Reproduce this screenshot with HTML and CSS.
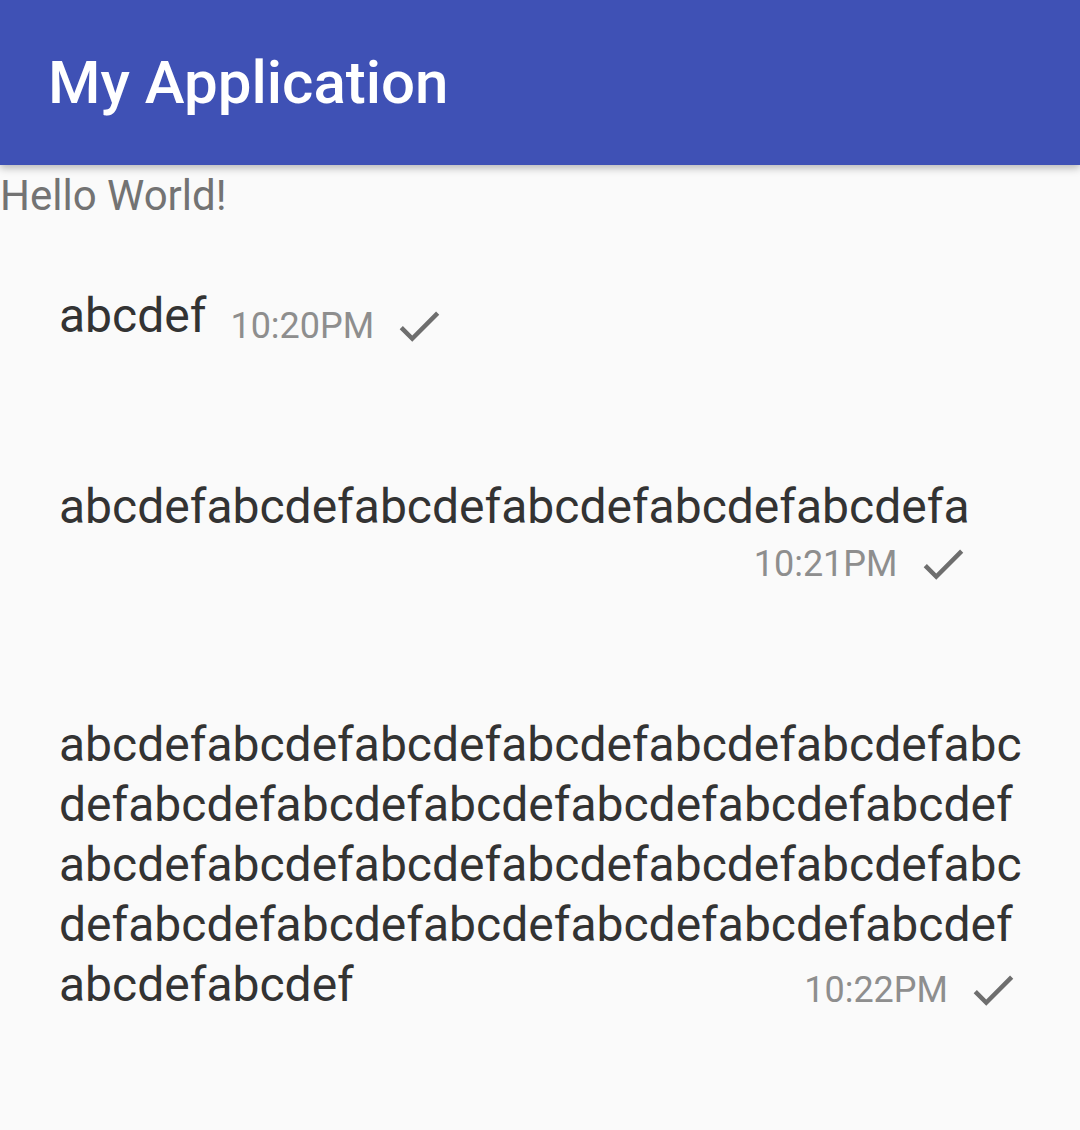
FILE: index.html
```html
<!DOCTYPE html>
<html lang="en">
<head>
<meta charset="utf-8">
<title>My Application</title>
<link rel="stylesheet" href="styles.css">
</head>
<body>
<header class="toolbar">
  <h1 class="toolbar-title">My Application</h1>
</header>
<main class="content">
  <p class="hello">Hello World!</p>
  <ul class="messages">
    <li class="msg msg-inline">
      <span class="msg-text">abcdef</span>
      <span class="meta">
        <span class="time">10:20PM</span>
        <svg class="check" viewBox="0 0 24 24" aria-hidden="true"><path d="M9 16.17L4.83 12l-1.42 1.41L9 19 21 7l-1.41-1.41z"/></svg>
      </span>
    </li>
    <li class="msg msg-below">
      <span class="msg-text">abcdefabcdefabcdefabcdefabcdefabcdefa</span>
      <span class="meta">
        <span class="time">10:21PM</span>
        <svg class="check" viewBox="0 0 24 24" aria-hidden="true"><path d="M9 16.17L4.83 12l-1.42 1.41L9 19 21 7l-1.41-1.41z"/></svg>
      </span>
    </li>
    <li class="msg msg-wrap">
      <p class="msg-text">abcdefabcdefabcdefabcdefabcdefabcdefabcdefabcdefabcdefabcdefabcdefabcdefabcdefabcdefabcdefabcdefabcdefabcdefabcdefabcdefabcdefabcdefabcdefabcdefabcdefabcdefabcdefabcdef<span class="meta"><span class="time">10:22PM</span><svg class="check" viewBox="0 0 24 24" aria-hidden="true"><path d="M9 16.17L4.83 12l-1.42 1.41L9 19 21 7l-1.41-1.41z"/></svg></span></p>
    </li>
  </ul>
</main>
</body>
</html>
```

FILE: styles.css
```css
* {
  box-sizing: border-box;
}

html, body {
  margin: 0;
  padding: 0;
}

body {
  background: #fafafa;
  font-family: Roboto, "Noto Sans", "Liberation Sans", sans-serif;
  width: 1080px;
  min-height: 1130px;
  overflow: hidden;
}

.toolbar {
  position: relative;
  z-index: 1;
  height: 165px;
  background: #3f51b5;
  display: flex;
  align-items: center;
  padding-left: 48px;
  box-shadow: 0 3px 8px rgba(0, 0, 0, 0.28);
}

.toolbar-title {
  margin: 0;
  color: #ffffff;
  font-size: 60px;
  font-weight: 500;
  line-height: 1;
}

.content {
  display: block;
}

.hello {
  margin: 6px 0 0 0;
  font-size: 42px;
  color: #737373;
  line-height: 49px;
}

.messages {
  list-style: none;
  margin: 0;
  padding: 4px 0 0 0;
  display: flex;
  flex-direction: column;
  align-items: flex-start;
}

.msg {
  padding: 62px 60px 62px 59px;
  max-width: 1080px;
}

.msg-text {
  margin: 0;
  font-size: 48px;
  line-height: 60px;
  color: #333333;
  word-break: break-all;
}

.meta {
  display: flex;
  align-items: center;
  height: 54px;
}

.time {
  font-size: 36px;
  line-height: 42px;
  color: #8e8e8e;
  margin-right: 18px;
}

.check {
  width: 54px;
  height: 54px;
  fill: #6e6e6e;
  flex: none;
}

.msg-inline {
  display: flex;
  align-items: flex-start;
}

.msg-inline .meta {
  margin-left: 24px;
  margin-top: 13px;
}

.msg-below {
  display: flex;
  flex-direction: column;
  align-items: stretch;
}

.msg-below .meta {
  justify-content: flex-end;
}

.msg-wrap {
  width: 1080px;
  padding-right: 55px;
}

.msg-wrap .msg-text {
  display: block;
}

.msg-wrap .meta {
  float: right;
  margin-top: 8px;
  margin-left: 24px;
  margin-right: 5px;
}
```
